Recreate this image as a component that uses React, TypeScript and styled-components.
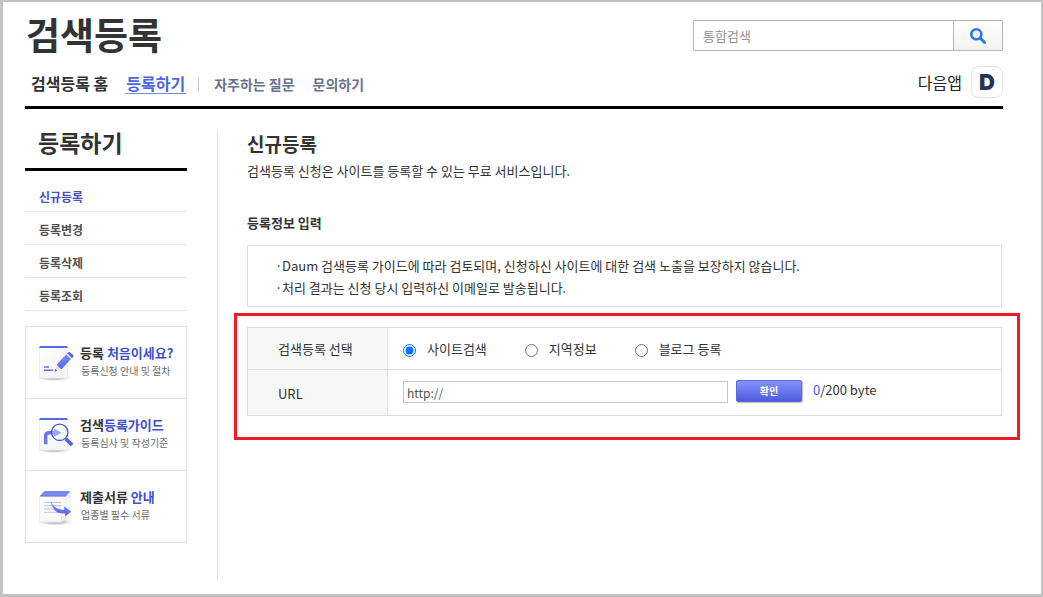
import React, { useState } from "react";
import styled, { createGlobalStyle } from "styled-components";

const GlobalStyle = createGlobalStyle`
  *, *::before, *::after { box-sizing: border-box; }
  body {
    margin: 0;
    background: #fff;
    color: #333;
    font-family: "Noto Sans CJK KR", sans-serif;
    font-size: 13px;
    line-height: 20px;
  }
  h1, h2, h3, p, ul { margin: 0; padding: 0; }
  ul { list-style: none; }
  a { color: inherit; text-decoration: none; }
  button, input { font-family: inherit; }
`;

const Page = styled.div`
  display: flex;
  flex-direction: column;
  min-height: 100vh;
  padding: 0 38px 13px 22px;
  border: solid #c3c3c3;
  border-width: 2px 2px 3px 3px;
`;

const Header = styled.header`
  border-bottom: 3px solid #000;
`;

const Bar = styled.div`
  display: flex;
  justify-content: space-between;
  align-items: flex-start;
`;

const BrandBar = styled(Bar)`
  height: 64px;
`;

const NavBar = styled(Bar)`
  height: 40px;
`;

const Brand = styled.h1`
  padding: 8px 0 0 1px;
  font-size: 37px;
  line-height: 48px;
  font-weight: 700;
`;

const SearchForm = styled.form`
  display: flex;
  width: 310px;
  height: 31px;
  margin-top: 18px;
  border: 1px solid #b4b4b4;
  border-radius: 2px;
`;

const SearchInput = styled.input`
  flex: 1;
  min-width: 0;
  padding: 0 9px;
  border: 0;
  outline: 0;
  background: transparent;
  font-size: 13px;
  &::placeholder { color: #929292; opacity: 1; }
`;

const SearchButton = styled.button`
  display: flex;
  align-items: center;
  justify-content: center;
  width: 49px;
  padding: 0;
  border: 0;
  border-left: 1px solid #b4b4b4;
  background: linear-gradient(#fff, #f2f2f2);
`;

const Nav = styled.nav`
  display: flex;
  align-items: flex-start;
  padding: 8px 0 0 5px;
`;

const NavLink = styled.a<{ $current?: boolean }>`
  margin-right: 16px;
  padding: 0 1px;
  border-bottom: 1px solid ${(p) => (p.$current ? "#7488ee" : "transparent")};
  color: ${(p) => (p.$current ? "#4c64e6" : "#333")};
  font-size: 16px;
  line-height: 19px;
  font-weight: 700;
`;

const SubLink = styled(NavLink)`
  color: #67728f;
  font-size: 14px;
  line-height: 20px;
`;

const NavDivider = styled.span`
  width: 1px;
  height: 13px;
  margin: 4px 14px 0 -4px;
  background: #c8c8c8;
`;

const AppLink = styled.a`
  display: flex;
  align-items: center;
  gap: 9px;
  color: #222;
  font-size: 16px;
  line-height: 32px;
`;

const AppBadge = styled.span`
  display: flex;
  align-items: center;
  justify-content: center;
  width: 32px;
  height: 32px;
  border: 1px solid #e3e3e3;
  border-radius: 8px;
  color: #263354;
  font: 900 22px/30px Inter, sans-serif;
`;

const Body = styled.div`
  display: flex;
  flex: 1;
  margin-top: 21px;
`;

const Sidebar = styled.aside`
  flex: none;
  width: 162px;
  margin-right: 30px;
`;

const SideTitle = styled.h2`
  padding: 0 13px 13px;
  border-bottom: 3px solid #000;
  font-size: 23px;
  line-height: 25px;
  font-weight: 700;
`;

const SideMenu = styled.ul`
  padding-top: 8px;
`;

const SideItem = styled.li<{ $current?: boolean }>`
  height: 33px;
  padding: 0 14px;
  border-bottom: 1px solid #e6e6e6;
  color: ${(p) => (p.$current ? "#4653c4" : "#505050")};
  font-size: 12px;
  line-height: 36px;
  font-weight: 700;
`;

const Guides = styled.ul`
  margin-top: 15px;
  border: 1px solid #e2e2e2;
`;

const Guide = styled.li`
  & + & { border-top: 1px solid #e2e2e2; }
`;

const GuideLink = styled.a`
  display: flex;
  gap: 3px;
  height: 71px;
  padding: 15px 0 0 9px;
`;

const GuideText = styled.span`
  display: flex;
  flex-direction: column;
  padding-top: 2px;
  white-space: nowrap;
`;

const GuideTitle = styled.strong`
  font-size: 13px;
  line-height: 18px;
  em { color: #3f50cf; font-style: normal; }
`;

const GuideNote = styled.span`
  padding-left: 1px;
  color: #6c6c6c;
  font-size: 10px;
  line-height: 18px;
`;

const Main = styled.main`
  flex: 1;
  min-width: 0;
  padding: 0 1px 0 29px;
  border-left: 1px solid #e2e2e2;
`;

const MainTitle = styled.h2`
  font-size: 19px;
  line-height: 28px;
  font-weight: 700;
`;

const Lead = styled.p`
  margin-top: 3px;
`;

const SectionTitle = styled.h3`
  margin-top: 32px;
  font-size: 13px;
  line-height: 20px;
  font-weight: 700;
`;

const Notice = styled.ul`
  margin-top: 12px;
  padding: 9px 27px 7px;
  border: 1px solid #ddd;
  line-height: 22px;
  li::before { content: "·"; display: inline-block; width: 7px; }
`;

const Highlight = styled.form`
  margin: 6px -18px 0 -13px;
  padding: 11px 15px 21px 10px;
  border: 3px solid #ed1c24;
`;

const FormTable = styled.table`
  width: 100%;
  border-collapse: collapse;
  th, td { border: 1px solid #ddd; vertical-align: top; }
`;

const LabelCell = styled.th<{ $top: number }>`
  width: 140px;
  padding: ${(p) => p.$top}px 0 0 30px;
  background: #f7f7f7;
  font-weight: 400;
  text-align: left;
`;

const FieldCell = styled.td`
  height: 42px;
  padding: 11px 0 0 15px;
`;

const UrlCell = styled(FieldCell)`
  height: 46px;
  padding-top: 10px;
`;

const Choices = styled.div`
  display: flex;
  gap: 38px;
`;

const Choice = styled.label`
  display: flex;
  align-items: center;
  gap: 11px;
  input { width: 13px; height: 13px; margin: 3px 0 0; }
`;

const UrlRow = styled.div`
  display: flex;
  align-items: flex-start;
`;

const UrlInput = styled.input`
  width: 325px;
  height: 22px;
  margin: 1px 8px 0 0;
  padding: 0 3px;
  border: 1px solid #c6c6c6;
  outline: 0;
  color: #555;
  font-size: 12px;
`;

const ConfirmButton = styled.button`
  width: 66px;
  height: 22px;
  padding: 0;
  border: 1px solid #5a69df;
  border-radius: 2px;
  background: linear-gradient(#8593fa, #4f5cdc);
  box-shadow: 1px 1px 1px #bbb;
  color: #fff;
  font-size: 10px;
  line-height: 18px;
  font-weight: 700;
`;

const ByteCount = styled.span`
  margin-left: 11px;
  em { color: #4a5ad8; font-style: normal; }
`;

const SearchIcon = () => (
  <svg width="18" height="18" viewBox="0 0 18 18" aria-hidden="true">
    <circle cx="7.3" cy="7.3" r="5" fill="none" stroke="#3277ee" strokeWidth="2.6" />
    <path d="M11.2 11.2 15.6 15.4" stroke="#3277ee" strokeWidth="3" strokeLinecap="round" />
  </svg>
);

const Paper = () => (
  <>
    <ellipse cx="19" cy="36" rx="19" ry="3.4" fill="url(#paperShadow)" />
    <path d="M4.5 5h28v31h-28z" fill="url(#paperFill)" stroke="#ececf0" />
    <path d="M5 4h27l1 2H4z" fill="#5468e8" />
  </>
);

const Defs = () => (
  <defs>
    <linearGradient id="paperFill" x1="0" y1="0" x2="1" y2="1">
      <stop offset="0" stopColor="#fff" />
      <stop offset="1" stopColor="#f4f4f6" />
    </linearGradient>
    <radialGradient id="paperShadow">
      <stop offset="0" stopColor="#aaa" />
      <stop offset="0.5" stopColor="#ccc" />
      <stop offset="1" stopColor="#fff" stopOpacity="0" />
    </radialGradient>
    <linearGradient id="inkFill" x1="0" y1="0" x2="0" y2="1">
      <stop offset="0" stopColor="#7c8bf5" />
      <stop offset="1" stopColor="#5264e3" />
    </linearGradient>
  </defs>
);

const PencilIcon = () => (
  <svg width="42" height="42" viewBox="0 0 42 42" aria-hidden="true">
    <Defs />
    <Paper />
    <path d="M9 25h5M9 28.200h9" stroke="#6272e8" strokeWidth="1.6" />
    <path d="m20 29.300 1.700-6.600 4.600 4.600z" fill="#dfe3fb" />
    <path d="m19.600 29.600.8-2.600 1.900 1.800z" fill="#4a58c8" />
    <path d="M21.700 22.700 31.300 12.300 36 17 26.300 27.400z" fill="url(#inkFill)" />
    <path d="m32.300 11.300.9-.7q1-.9 2-.1l2.900 2.600q.8 1 .1 2l-1.200 1.100z" fill="#5264d8" />
  </svg>
);

const GuideIcon = () => (
  <svg width="42" height="42" viewBox="0 0 42 42" aria-hidden="true">
    <Paper />
    <path d="M10.700 30.200V22q0-3.300 3.600-3.300h5" fill="none" stroke="#6676ea" strokeWidth="3.400" />
    <circle cx="24.700" cy="18.300" r="8.200" fill="#f4f6ff" fillOpacity="0.6" />
    <path d="M16.500 17h2.200v-2.500l7.800 4.300-7.800 4.300v-2.600h-2.200z" fill="#98a4f4" />
    <circle cx="24.700" cy="18.300" r="8.200" fill="none" stroke="#4a5cc9" strokeWidth="1.300" />
    <path d="m30.800 24.700 6.300 6.300" stroke="#5365dc" strokeWidth="3.600" />
  </svg>
);

const DocumentIcon = () => (
  <svg width="42" height="42" viewBox="0 0 42 42" aria-hidden="true">
    <ellipse cx="20" cy="36" rx="20" ry="3.800" fill="url(#paperShadow)" />
    <path d="M31 10.500 35 6v25l-4 4.500z" fill="#fafafb" stroke="#e2e2e8" strokeWidth="0.800" />
    <path d="M4.500 10.500H31V31l-4.500 5h-22z" fill="url(#paperFill)" stroke="#ececf0" />
    <path d="M31 31h-4.500v5z" fill="#fff" stroke="#d9d9e0" strokeWidth="0.800" />
    <path d="M9.500 5.200H35L30.800 10.500H4.500z" fill="#5468e8" />
    <path d="M8 7.100h25.500M6.500 8.900h25.500" stroke="#c9d0fa" strokeWidth="0.600" />
    <path d="M9 16.500h17M9 19.700h17M9 23h17M9 26.300h17" stroke="#b7c1f5" />
    <path d="M15.700 15.500q4 8.500 13.500 8.500v-3.500l7 5-6 5v-3Q18 28.500 15.700 15.500z" fill="url(#inkFill)" />
  </svg>
);

const sideItems = ["신규등록", "등록변경", "등록삭제", "등록조회"];

const guides = [
  { icon: <PencilIcon />, dark: "등록 ", accent: "처음이세요?", note: "등록신청 안내 및 절차" },
  { icon: <GuideIcon />, dark: "검색", accent: "등록가이드", note: "등록심사 및 작성기준" },
  { icon: <DocumentIcon />, dark: "제출서류 ", accent: "안내", note: "업종별 필수 서류" },
];

const kinds = ["사이트검색", "지역정보", "블로그 등록"];

export default function App() {
  const [kind, setKind] = useState(kinds[0]);
  const [url, setUrl] = useState("http://");

  return (
    <>
      <GlobalStyle />
      <Page>
        <Header>
          <BrandBar>
            <Brand>검색등록</Brand>
            <SearchForm role="search" onSubmit={(e) => e.preventDefault()}>
              <SearchInput type="text" placeholder="통합검색" aria-label="통합검색" />
              <SearchButton type="submit" aria-label="검색">
                <SearchIcon />
              </SearchButton>
            </SearchForm>
          </BrandBar>
          <NavBar>
            <Nav>
              <NavLink href="#home">검색등록 홈</NavLink>
              <NavLink href="#register" $current>등록하기</NavLink>
              <NavDivider />
              <SubLink href="#faq">자주하는 질문</SubLink>
              <SubLink href="#contact">문의하기</SubLink>
            </Nav>
            <AppLink href="#app">
              다음앱
              <AppBadge>D</AppBadge>
            </AppLink>
          </NavBar>
        </Header>
        <Body>
          <Sidebar>
            <SideTitle>등록하기</SideTitle>
            <SideMenu>
              {sideItems.map((item, i) => (
                <SideItem key={item} $current={i === 0}>
                  <a href={`#menu-${i}`}>{item}</a>
                </SideItem>
              ))}
            </SideMenu>
            <Guides>
              {guides.map((g) => (
                <Guide key={g.note}>
                  <GuideLink href="#guide">
                    {g.icon}
                    <GuideText>
                      <GuideTitle>
                        {g.dark}
                        <em>{g.accent}</em>
                      </GuideTitle>
                      <GuideNote>{g.note}</GuideNote>
                    </GuideText>
                  </GuideLink>
                </Guide>
              ))}
            </Guides>
          </Sidebar>
          <Main>
            <MainTitle>신규등록</MainTitle>
            <Lead>검색등록 신청은 사이트를 등록할 수 있는 무료 서비스입니다.</Lead>
            <SectionTitle>등록정보 입력</SectionTitle>
            <Notice>
              <li>Daum 검색등록 가이드에 따라 검토되며, 신청하신 사이트에 대한 검색 노출을 보장하지 않습니다.</li>
              <li>처리 결과는 신청 당시 입력하신 이메일로 발송됩니다.</li>
            </Notice>
            <Highlight onSubmit={(e) => e.preventDefault()}>
              <FormTable>
                <tbody>
                  <tr>
                    <LabelCell scope="row" $top={11}>검색등록 선택</LabelCell>
                    <FieldCell>
                      <Choices>
                        {kinds.map((k) => (
                          <Choice key={k}>
                            <input type="radio" name="kind" checked={kind === k} onChange={() => setKind(k)} />
                            {k}
                          </Choice>
                        ))}
                      </Choices>
                    </FieldCell>
                  </tr>
                  <tr>
                    <LabelCell scope="row" $top={14}>
                      <label htmlFor="url">URL</label>
                    </LabelCell>
                    <UrlCell>
                      <UrlRow>
                        <UrlInput id="url" type="text" value={url} onChange={(e) => setUrl(e.target.value)} />
                        <ConfirmButton type="submit">확인</ConfirmButton>
                        <ByteCount>
                          <em>0</em>/200 byte
                        </ByteCount>
                      </UrlRow>
                    </UrlCell>
                  </tr>
                </tbody>
              </FormTable>
            </Highlight>
          </Main>
        </Body>
      </Page>
    </>
  );
}
